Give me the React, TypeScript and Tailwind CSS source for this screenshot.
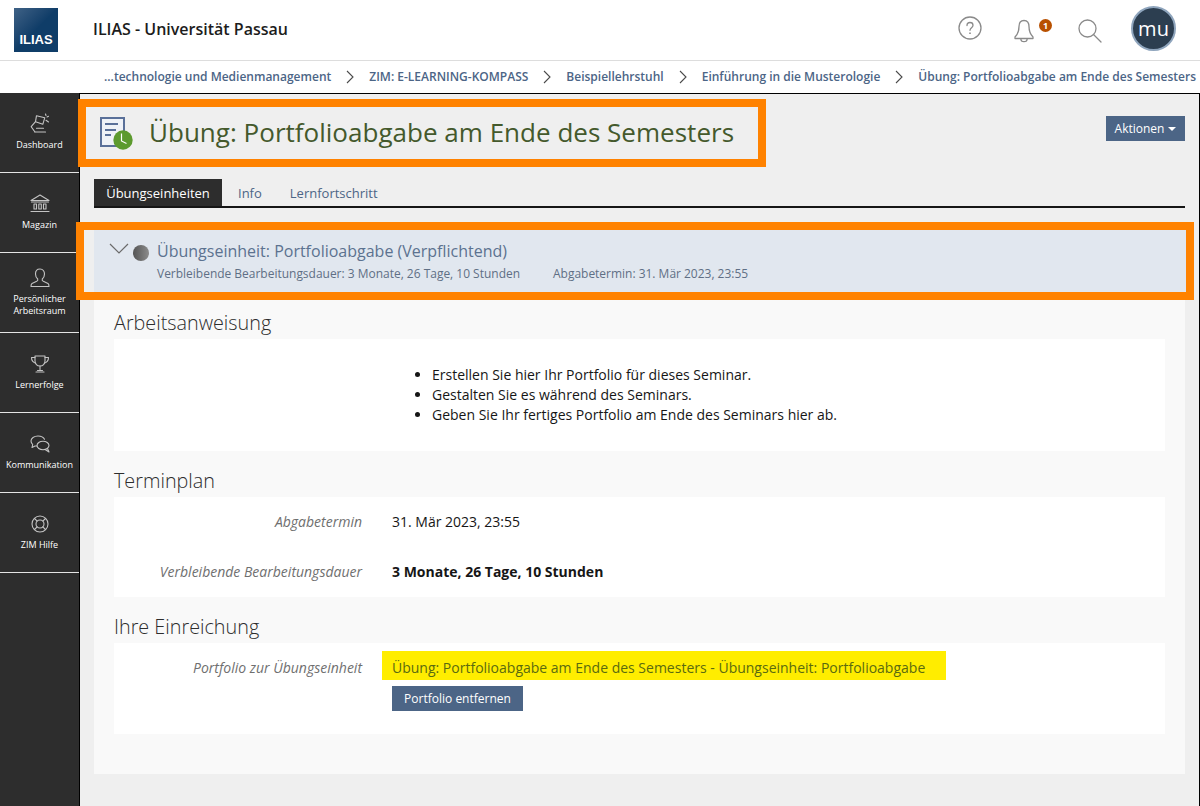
import React from "react";

const crumbs = [
  "...technologie und Medienmanagement",
  "ZIM: E-LEARNING-KOMPASS",
  "Beispiellehrstuhl",
  "Einführung in die Musterologie",
  "Übung: Portfolioabgabe am Ende des Semesters",
];

function Icon({ children, size = 24 }: { children: React.ReactNode; size?: number }) {
  return (
    <svg width={size} height={size} viewBox="0 0 24 24" fill="none" stroke="#c4c4c4" strokeWidth="1.1" strokeLinecap="round" strokeLinejoin="round">
      {children}
    </svg>
  );
}

const navItems: { label: string[]; icon: React.ReactNode }[] = [
  {
    label: ["Dashboard"],
    icon: (
      <Icon>
        <path d="M8.500 4.700l8.300 2-2 6.600-7.300-2.600z" />
        <path d="M7.500 10.700l-4.300 5 3.600 5" />
        <path d="M6.800 21h10.700" />
        <path d="M8.500 17.300h7" />
        <path d="M19 6l1.500-.7M18 9.300l2.500 1.700M17.500 3l.5 1.500" />
      </Icon>
    ),
  },
  {
    label: ["Magazin"],
    icon: (
      <Icon>
        <path d="M3 9.500L12 4l9 5.500z" />
        <path d="M3.500 11h17" />
        <path d="M6 13h2.500v5H6zM10.800 13h2.500v5h-2.500zM15.500 13H18v5h-2.500z" />
        <path d="M3 20.500h18" />
      </Icon>
    ),
  },
  {
    label: ["Persönlicher", "Arbeitsraum"],
    icon: (
      <Icon>
        <path d="M12 4c-3 0-4.500 2.300-4.500 5 0 2.300 1 4 2.200 5 .4 1-.1 1.800-1 2.300L4 18.500c-.8.500-1 1.500-1 3h18c0-1.500-.2-2.500-1-3l-4.700-2.200c-.9-.5-1.400-1.300-1-2.300 1.200-1 2.200-2.700 2.200-5 0-2.700-1.500-5-4.500-5z" />
      </Icon>
    ),
  },
  {
    label: ["Lernerfolge"],
    icon: (
      <Icon>
        <path d="M7 5h10v5c0 2.800-2 5-5 5s-5-2.200-5-5z" />
        <path d="M7 6.500H3.500c0 2.500 1 4.800 4.300 5.700M17 6.500h3.500c0 2.500-1 4.800-4.300 5.700" />
        <path d="M12 15v4.500" />
        <path d="M8 21h8M9.500 19.500h5" />
      </Icon>
    ),
  },
  {
    label: ["Kommunikation"],
    icon: (
      <Icon>
        <path d="M9 15H7l-3 1.500.7-3C3.600 12.300 3 11.200 3 10c0-2.800 3-5 7-5 3 0 5.500 1.200 6.500 3.300" />
        <ellipse cx="15" cy="14.500" rx="6" ry="4.200" />
        <path d="M19.500 17.500l1.500 3.500-3.500-2.300" />
      </Icon>
    ),
  },
  {
    label: ["ZIM Hilfe"],
    icon: (
      <Icon>
        <circle cx="12" cy="13" r="8" />
        <circle cx="12" cy="13" r="4" />
        <path d="M6.500 7.500l2.700 2.700M17.500 7.500l-2.700 2.700M6.500 18.500l2.700-2.700M17.500 18.500l-2.700-2.700" />
      </Icon>
    ),
  },
];

function NavItem({ label, icon }: { label: string[]; icon: React.ReactNode }) {
  return (
    <div className="flex h-[80px] flex-col items-center justify-center border-b border-[#e4e4e4] pb-[3px] text-center text-[9px] font-medium leading-[12px] text-white">
      <div className="mb-[4px] h-[24px]">{icon}</div>
      {label.map((line) => (
        <span key={line}>{line}</span>
      ))}
    </div>
  );
}

function FormRow({ label, children, className }: { label: string; children: React.ReactNode; className?: string }) {
  return (
    <div className={`flex text-[14px] leading-[20px] ${className ?? ""}`}>
      <div className="w-[248px] shrink-0 text-right italic text-[#6f6f6f]">{label}</div>
      <div className="ml-[30px] text-[#161616]">{children}</div>
    </div>
  );
}

export default function App() {
  return (
    <div className="relative h-[806px] w-[1200px] overflow-hidden bg-white font-['Open_Sans',sans-serif]">
      {/* top bar */}
      <header className="flex h-[61px] items-start border-b border-[#dddddd] pl-[14px]">
        <div className="mt-[8px] flex h-[44px] w-[44px] items-end justify-center bg-gradient-to-br from-[#3f6286] via-[#0f3d68] to-[#0f3d68] pb-[5px] font-['Liberation_Sans',sans-serif] text-[13px] font-bold leading-[15px] text-white">
          ILIAS
        </div>
        <div className="ml-[35px] mt-[18px] text-[16px] font-semibold leading-[22px] text-[#1c1c1c]">ILIAS - Universität Passau</div>
        <div className="ml-auto mt-[6px] flex items-start">
          <svg className="mt-[10px]" width="24" height="24" viewBox="0 0 24 24" fill="none" stroke="#8a8a8a" strokeWidth="1.300">
            <circle cx="12" cy="12" r="11" />
            <path d="M9 9.500c0-2 1.300-3 3-3s3 1.100 3 2.800c0 2.400-3 2.400-3 5" strokeLinecap="round" />
            <path d="M12 16.500v1.600" strokeWidth="1.600" />
          </svg>
          <div className="relative ml-[32px] mt-[13px] h-[24px] w-[20px]">
            <svg width="20" height="24" viewBox="0 0 20 24" fill="none" stroke="#8a8a8a" strokeWidth="1.300" strokeLinejoin="round">
              <path d="M10 1.500C6.500 1.500 5 4 5 7.500c0 4.500-1 7.500-4 10.500v1.500h18V18c-3-3-4-6-4-10.500C15 4 13.500 1.500 10 1.500z" />
              <path d="M6.800 19.500c0 2 1.400 3.200 3.200 3.200s3.200-1.200 3.200-3.200" />
            </svg>
            <span className="absolute left-[25px] top-[0px] flex h-[13px] w-[13px] items-center justify-center rounded-full bg-[#b85000] text-[9px] font-bold text-white">
              1
            </span>
          </div>
          <svg className="ml-[44px] mt-[13px]" width="24" height="24" viewBox="0 0 24 24" fill="none" stroke="#8a8a8a" strokeWidth="1.300" strokeLinecap="round">
            <circle cx="9.500" cy="9.500" r="8.500" />
            <path d="M15.500 15.500l7.500 7.500" />
          </svg>
          <div className="ml-[29px] mr-[24px] flex h-[45px] w-[45px] items-center justify-center rounded-full border-2 border-[#8fa5bd] bg-[#2c3e50] text-[20px] text-white">
            mu
          </div>
        </div>
      </header>

      {/* breadcrumbs */}
      <nav className="flex h-[32px] items-center justify-end whitespace-nowrap pr-[4px] text-[12px] font-semibold text-[#4c6586]">
        {crumbs.map((crumb, i) => (
          <React.Fragment key={crumb}>
            {i > 0 && (
              <svg className="mx-[15px]" width="8" height="14" viewBox="0 0 8 14" fill="none" stroke="#4a4a4a" strokeWidth="1.100">
                <path d="M1 1l6 6-6 6" />
              </svg>
            )}
            <span>{crumb}</span>
          </React.Fragment>
        ))}
      </nav>

      <div className="flex h-[713px]">
        {/* main bar */}
        <aside className="h-full w-[80px] shrink-0 border-r border-black bg-[#2d2d2d]">
          {navItems.map((item) => (
            <NavItem key={item.label[0]} {...item} />
          ))}
        </aside>

        {/* content */}
        <main className="flex min-w-0 flex-1 flex-col border-r border-t border-black bg-[#efefef] pl-[14px] pr-[14px]">
          <div className="flex h-[85px] items-start pt-[22px]">
            <svg className="ml-[6px]" width="34" height="35" viewBox="0 0 34 35">
              <rect x="1" y="2" width="23" height="28" fill="#eff2f7" stroke="#5a7099" strokeWidth="2" />
              <path d="M5 7h13v2H5zM5 13h11v2H5zM5 18h6v2H5z" fill="#5a7099" />
              <circle cx="23" cy="24" r="9.700" fill="#5c9a2e" />
              <path d="M21.500 17.500V25l5 2.500" fill="none" stroke="#ffffff" strokeWidth="1.200" />
            </svg>
            <h1 className="ml-[15px] mt-[-2px] text-[26.04px] font-normal leading-[36px] text-[#44592c]">
              Übung: Portfolioabgabe am Ende des Semesters
            </h1>
            <button className="ml-auto flex h-[25px] w-[79px] items-center justify-center bg-[#4c6586] text-[12px] font-normal text-white">
              Aktionen
              <span className="ml-[4px] mt-[1px] h-0 w-0 border-x-[4px] border-t-[4px] border-x-transparent border-t-white" />
            </button>
          </div>

          <div className="flex h-[29px] items-stretch border-b-2 border-[#161616] text-[13px] text-[#4c6586]">
            <div className="flex w-[128px] items-center justify-center bg-[#2d2d2d] pt-[3px] text-white">Übungseinheiten</div>
            <div className="ml-[16px] flex items-center pt-[3px]">Info</div>
            <div className="ml-[28px] flex items-center pt-[3px]">Lernfortschritt</div>
          </div>

          <div className="mr-[-1px] mt-[22px] flex h-[62px] bg-[#e1e7ef] pl-[15px] pt-[10px]">
            <svg className="mt-[2px]" width="20" height="14" viewBox="0 0 20 14" fill="none" stroke="#6b6b6b" strokeWidth="1.200">
              <path d="M1 2l9 9 9-9" />
            </svg>
            <div className="ml-[4px] mt-[5px] h-[16px] w-[16px] rounded-full bg-gradient-to-r from-[#555555] to-[#8c8c8c]" />
            <div className="ml-[8px]">
              <div className="text-[16px] leading-[22px] text-[#5c7290]">Übungseinheit: Portfolioabgabe (Verpflichtend)</div>
              <div className="mt-[4px] flex text-[11.97px] leading-[16px] text-[#5f6f85]">
                <span>Verbleibende Bearbeitungsdauer: 3 Monate, 26 Tage, 10 Stunden</span>
                <span className="ml-[33px]">Abgabetermin: 31. Mär 2023, 23:55</span>
              </div>
            </div>
          </div>

          <div className="flex h-[482px] flex-col bg-[#f9f9f9] px-[20px]">
            <h2 className="mt-[18px] text-[19.8px] font-light leading-[26px] text-[#2d2d2d]">Arbeitsanweisung</h2>
            <div className="mt-[3px] h-[112px] bg-white pl-[278px] pt-[26px]">
              <ul className="list-disc pl-[40px] text-[14px] leading-[20px] text-[#161616]">
                <li>Erstellen Sie hier Ihr Portfolio für dieses Seminar.</li>
                <li>Gestalten Sie es während des Seminars.</li>
                <li>Geben Sie Ihr fertiges Portfolio am Ende des Seminars hier ab.</li>
              </ul>
            </div>

            <h2 className="mt-[17px] text-[19.8px] font-light leading-[26px] text-[#2d2d2d]">Terminplan</h2>
            <div className="mt-[3px] h-[100px] bg-white pt-[15px]">
              <FormRow label="Abgabetermin">31. Mär 2023, 23:55</FormRow>
              <FormRow label="Verbleibende Bearbeitungsdauer" className="mt-[30px]">
                <b className="font-bold">3 Monate, 26 Tage, 10 Stunden</b>
              </FormRow>
            </div>

            <h2 className="mt-[17px] text-[19.8px] font-light leading-[26px] text-[#2d2d2d]">Ihre Einreichung</h2>
            <div className="mt-[3px] h-[91px] bg-white pt-[8px]">
              <div className="flex text-[14px] leading-[20px]">
                <div className="w-[248px] shrink-0 pt-[7px] text-right italic text-[#6f6f6f]">Portfolio zur Übungseinheit</div>
                <div className="ml-[20px]">
                  <div className="flex h-[29px] w-[564px] items-center bg-[#ffed00] pl-[10px] pt-[4px] text-[#5a6a10]">
                    Übung: Portfolioabgabe am Ende des Semesters - Übungseinheit: Portfolioabgabe
                  </div>
                  <button className="ml-[10px] mt-[6px] h-[25px] w-[131px] bg-[#4c6586] text-[12px] font-medium text-white">
                    Portfolio entfernen
                  </button>
                </div>
              </div>
            </div>
          </div>
        </main>
      </div>

      {/* orange highlight frames drawn over the page */}
      <div className="pointer-events-none absolute left-[78px] top-[99px] h-[68px] w-[688px] border-[8px] border-[#ff8200]" />
      <div className="pointer-events-none absolute left-[76px] top-[222px] h-[78px] w-[1118px] border-[8px] border-[#ff8200]" />
    </div>
  );
}
